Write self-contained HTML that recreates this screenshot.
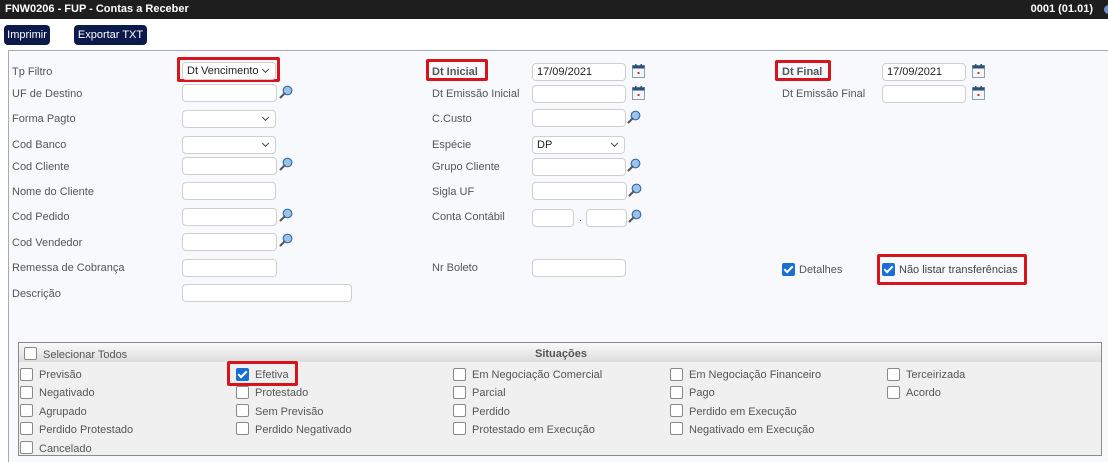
<!DOCTYPE html><html><head><meta charset="utf-8"><style>
*{box-sizing:border-box;margin:0;padding:0}
body{width:1108px;height:462px;overflow:hidden;background:#fff;font-family:"Liberation Sans",Arial,sans-serif;font-size:11px;color:#555;position:relative}
.a{position:absolute;white-space:nowrap}
.bar{left:0;top:0;width:1108px;height:19px;background:#1e1e1e;color:#fff;font-weight:bold;font-size:11px;line-height:19px}
.btn{background:#0c1a4b;color:#fff;border-radius:4px;height:20px;line-height:20px;text-align:center;font-size:11px}
.in{position:absolute;height:18px;border:1px solid #cfcfcf;border-radius:4px;background:#fff;font-size:11px;color:#222;line-height:16px;padding-left:4px}
.sel::after{content:"";position:absolute;right:7px;top:4px;width:4px;height:4px;border-right:1.3px solid #444;border-bottom:1.3px solid #444;transform:rotate(45deg)}
.lb{position:absolute;line-height:14px;white-space:nowrap}
.red{position:absolute;border:3px solid #d8131b;border-radius:2px}
.cb{position:absolute;width:13px;height:13px;border:1.5px solid #8a8a8a;border-radius:2px;background:#fff}
.ck{position:absolute;width:13px;height:13px;border-radius:2px;background:#1a6fd6}
.ck::after{content:"";position:absolute;left:4px;top:1px;width:3px;height:7px;border-right:2px solid #fff;border-bottom:2px solid #fff;transform:rotate(45deg)}
</style></head><body>
<div class="a bar"><span style="position:absolute;left:5px">FNW0206 - FUP - Contas a Receber</span><span style="position:absolute;right:15px">0001 (01.01)</span><span style="position:absolute;left:1104px;top:5px;width:9px;height:9px;border-radius:50%;background:#6a8ec0"></span></div>
<div class="a btn" style="left:4px;top:25px;width:46px">Imprimir</div>
<div class="a btn" style="left:74px;top:25px;width:73px">Exportar TXT</div>
<div class="a" style="left:8px;top:50px;width:1100px;height:412px;border-top:1px solid #aaa;border-left:1px solid #aaa;background:#f8f9fc"></div>
<svg width="0" height="0" style="position:absolute"><defs>
<symbol id="mg" viewBox="0 0 14 14"><circle cx="8.5" cy="5.5" r="4.3" fill="#9cc3ec" stroke="#3a6ea8" stroke-width="1.2"/><path d="M5.5 8.5L1.5 12.5" stroke="#555" stroke-width="2" stroke-linecap="round"/></symbol>
<symbol id="cal" viewBox="0 0 13 14"><rect x="0.5" y="1.5" width="12" height="12" fill="#f4f6f9" stroke="#8aa0b8"/><rect x="0.5" y="1.5" width="12" height="3" fill="#2d4f7a"/><rect x="3" y="0" width="1.5" height="3" fill="#2d4f7a"/><rect x="8.5" y="0" width="1.5" height="3" fill="#2d4f7a"/><rect x="5.5" y="8" width="2" height="2" fill="#c33"/></symbol>
</defs></svg>
<div class="lb" style="left:12px;top:65px">Tp Filtro</div>
<div class="red" style="left:177px;top:57px;width:103px;height:25px"></div>
<div class="in sel" style="left:182px;top:62px;width:94px;color:#222">Dt Vencimento</div>
<div class="lb" style="left:12px;top:87px">UF de Destino</div>
<div class="in" style="left:182px;top:84px;width:95px"></div><svg class="a" style="left:279px;top:85px" width="14" height="14"><use href="#mg"/></svg>
<div class="lb" style="left:12px;top:112px">Forma Pagto</div>
<div class="in sel" style="left:182px;top:110px;width:94px"></div>
<div class="lb" style="left:12px;top:138px">Cod Banco</div>
<div class="in sel" style="left:182px;top:136px;width:94px"></div>
<div class="lb" style="left:12px;top:160px">Cod Cliente</div>
<div class="in" style="left:182px;top:157px;width:95px"></div><svg class="a" style="left:279px;top:157px" width="14" height="14"><use href="#mg"/></svg>
<div class="lb" style="left:12px;top:185px">Nome do Cliente</div>
<div class="in" style="left:182px;top:182px;width:94px"></div>
<div class="lb" style="left:12px;top:210px">Cod Pedido</div>
<div class="in" style="left:182px;top:208px;width:95px"></div><svg class="a" style="left:279px;top:208px" width="14" height="14"><use href="#mg"/></svg>
<div class="lb" style="left:12px;top:236px">Cod Vendedor</div>
<div class="in" style="left:182px;top:233px;width:95px"></div><svg class="a" style="left:279px;top:233px" width="14" height="14"><use href="#mg"/></svg>
<div class="lb" style="left:12px;top:261px">Remessa de Cobrança</div>
<div class="in" style="left:182px;top:259px;width:95px"></div>
<div class="lb" style="left:12px;top:287px">Descrição</div>
<div class="in" style="left:182px;top:284px;width:170px"></div>
<div class="red" style="left:426px;top:59px;width:62px;height:22px"></div>
<div class="lb" style="left:432px;top:65px;font-weight:bold">Dt Inicial</div>
<div class="in" style="left:532px;top:63px;width:94px">17/09/2021</div><svg class="a" style="left:632px;top:64px" width="13" height="14"><use href="#cal"/></svg>
<div class="lb" style="left:432px;top:87px">Dt Emissão Inicial</div>
<div class="in" style="left:532px;top:85px;width:94px"></div><svg class="a" style="left:632px;top:86px" width="13" height="14"><use href="#cal"/></svg>
<div class="lb" style="left:432px;top:112px">C.Custo</div>
<div class="in" style="left:532px;top:109px;width:94px"></div><svg class="a" style="left:627px;top:110px" width="14" height="14"><use href="#mg"/></svg>
<div class="lb" style="left:432px;top:138px">Espécie</div>
<div class="in sel" style="left:532px;top:136px;width:93px">DP</div>
<div class="lb" style="left:432px;top:160px">Grupo Cliente</div>
<div class="in" style="left:532px;top:158px;width:94px"></div><svg class="a" style="left:627px;top:158px" width="14" height="14"><use href="#mg"/></svg>
<div class="lb" style="left:432px;top:185px">Sigla UF</div>
<div class="in" style="left:532px;top:182px;width:95px"></div><svg class="a" style="left:628px;top:183px" width="14" height="14"><use href="#mg"/></svg>
<div class="lb" style="left:432px;top:210px">Conta Contábil</div>
<div class="in" style="left:532px;top:209px;width:42px"></div><div class="lb" style="left:579px;top:211px">.</div>
<div class="in" style="left:586px;top:209px;width:41px"></div><svg class="a" style="left:628px;top:209px" width="14" height="14"><use href="#mg"/></svg>
<div class="lb" style="left:432px;top:261px">Nr Boleto</div>
<div class="in" style="left:532px;top:259px;width:94px"></div>
<div class="red" style="left:775px;top:60px;width:56px;height:21px"></div>
<div class="lb" style="left:782px;top:65px;font-weight:bold">Dt Final</div>
<div class="in" style="left:882px;top:63px;width:84px">17/09/2021</div><svg class="a" style="left:972px;top:64px" width="13" height="14"><use href="#cal"/></svg>
<div class="lb" style="left:782px;top:87px">Dt Emissão Final</div>
<div class="in" style="left:882px;top:85px;width:84px"></div><svg class="a" style="left:972px;top:86px" width="13" height="14"><use href="#cal"/></svg>
<div class="ck" style="left:782px;top:263px"></div><div class="lb" style="left:799px;top:263px">Detalhes</div>
<div class="red" style="left:877px;top:254px;width:150px;height:31px"></div>
<div class="ck" style="left:882px;top:263px"></div><div class="lb" style="left:899px;top:263px;color:#444">Não listar transferências</div>
<div class="a" style="left:18px;top:342px;width:1084px;height:114px;border:1px solid #8a8a8a;background:#f0f0f0"></div>
<div class="a" style="left:19px;top:343px;width:1082px;height:19px;background:linear-gradient(#fafafa,#dcdcdc)"></div>
<div class="cb" style="left:24px;top:347px"></div><div class="lb" style="left:43px;top:348px">Selecionar Todos</div>
<div class="lb" style="left:535px;top:347px;font-weight:bold">Situações</div>
<div class="red" style="left:227px;top:361px;width:71px;height:25px"></div>
<div class="cb" style="left:20px;top:368px"></div><div class="lb" style="left:39px;top:368px">Previsão</div>
<div class="cb" style="left:20px;top:386px"></div><div class="lb" style="left:39px;top:386px">Negativado</div>
<div class="cb" style="left:20px;top:404px"></div><div class="lb" style="left:39px;top:405px">Agrupado</div>
<div class="cb" style="left:20px;top:422px"></div><div class="lb" style="left:39px;top:423px">Perdido Protestado</div>
<div class="cb" style="left:20px;top:441px"></div><div class="lb" style="left:39px;top:442px">Cancelado</div>
<div class="ck" style="left:236px;top:368px"></div><div class="lb" style="left:255px;top:368px">Efetiva</div>
<div class="cb" style="left:236px;top:386px"></div><div class="lb" style="left:255px;top:386px">Protestado</div>
<div class="cb" style="left:236px;top:404px"></div><div class="lb" style="left:255px;top:405px">Sem Previsão</div>
<div class="cb" style="left:236px;top:422px"></div><div class="lb" style="left:255px;top:423px">Perdido Negativado</div>
<div class="cb" style="left:453px;top:368px"></div><div class="lb" style="left:472px;top:368px">Em Negociação Comercial</div>
<div class="cb" style="left:453px;top:386px"></div><div class="lb" style="left:472px;top:386px">Parcial</div>
<div class="cb" style="left:453px;top:404px"></div><div class="lb" style="left:472px;top:405px">Perdido</div>
<div class="cb" style="left:453px;top:422px"></div><div class="lb" style="left:472px;top:423px">Protestado em Execução</div>
<div class="cb" style="left:670px;top:368px"></div><div class="lb" style="left:689px;top:368px">Em Negociação Financeiro</div>
<div class="cb" style="left:670px;top:386px"></div><div class="lb" style="left:689px;top:386px">Pago</div>
<div class="cb" style="left:670px;top:404px"></div><div class="lb" style="left:689px;top:405px">Perdido em Execução</div>
<div class="cb" style="left:670px;top:422px"></div><div class="lb" style="left:689px;top:423px">Negativado em Execução</div>
<div class="cb" style="left:887px;top:368px"></div><div class="lb" style="left:906px;top:368px">Terceirizada</div>
<div class="cb" style="left:887px;top:386px"></div><div class="lb" style="left:906px;top:386px">Acordo</div>
</body></html>
